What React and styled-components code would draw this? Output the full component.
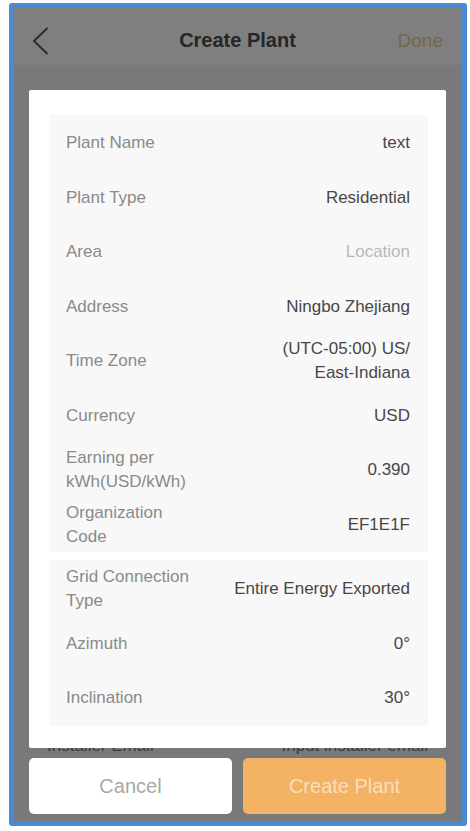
import styled, { createGlobalStyle } from "styled-components";

const GlobalStyle = createGlobalStyle`
  body {
    margin: 0;
    background: #ffffff;
    font-family: "Liberation Sans", Arial, sans-serif;
  }
`;

const basics = [
  { label: "Plant Name", value: "text" },
  { label: "Plant Type", value: "Residential" },
  { label: "Area", value: "Location", placeholder: true },
  { label: "Address", value: "Ningbo Zhejiang" },
  { label: "Time Zone", value: "(UTC-05:00) US/\nEast-Indiana" },
  { label: "Currency", value: "USD" },
  { label: "Earning per\nkWh(USD/kWh)", value: "0.390" },
  { label: "Organization\nCode", value: "EF1E1F" },
];

const system = [
  { label: "Grid Connection\nType", value: "Entire Energy Exported" },
  { label: "Azimuth", value: "0°" },
  { label: "Inclination", value: "30°" },
];

const BackIcon = () => (
  <svg width="17" height="28" viewBox="0 0 17 28" fill="none">
    <polyline
      points="15,1.5 2,14 15,26.5"
      stroke="#2c2c2c"
      strokeWidth="2"
      strokeLinecap="round"
      strokeLinejoin="round"
    />
  </svg>
);

const App = () => {
  return (
    <>
      <GlobalStyle />
      <Frame>
        <Header>
          <Back>
            <BackIcon />
          </Back>
          <Title>Create Plant</Title>
          <Done>Done</Done>
        </Header>
        <Body>
          <Card>
            <Group>
              {basics.map((row) => (
                <Row key={row.label}>
                  <Label>{row.label}</Label>
                  <Value $placeholder={row.placeholder}>{row.value}</Value>
                </Row>
              ))}
            </Group>
            <Group $offset>
              {system.map((row) => (
                <Row key={row.label}>
                  <Label>{row.label}</Label>
                  <Value>{row.value}</Value>
                </Row>
              ))}
            </Group>
          </Card>
          <Peek>
            <PeekText>Installer Email</PeekText>
            <PeekText>Input installer email</PeekText>
          </Peek>
          <Footer>
            <Button>Cancel</Button>
            <Button $primary>Create Plant</Button>
          </Footer>
        </Body>
      </Frame>
    </>
  );
};

export default App;

const Frame = styled.div`
  box-sizing: border-box;
  margin: 3px 0 0 9px;
  width: 458px;
  height: 823px;
  border: 5px solid #4b89d5;
  border-radius: 3px;
  background: #78797a;
  display: flex;
  flex-direction: column;
  overflow: hidden;
`;

const Header = styled.div`
  height: 57px;
  box-sizing: border-box;
  flex-shrink: 0;
  background: #7f7f7f;
  display: grid;
  grid-template-columns: 1fr auto 1fr;
  align-items: center;
  padding: 8px 19px 0 18px;
`;

const Back = styled.div`
  display: flex;
  align-items: center;
`;

const Title = styled.div`
  font-size: 20px;
  font-weight: bold;
  color: #262626;
`;

const Done = styled.div`
  justify-self: end;
  font-size: 19px;
  color: #76664a;
`;

const Body = styled.div`
  display: flex;
  flex-direction: column;
  padding: 25px 16px 0 15px;
`;

const Card = styled.div`
  height: 658px;
  box-sizing: border-box;
  background: #ffffff;
  border-radius: 2px;
  padding: 25px 18px 0 20px;
  display: flex;
  flex-direction: column;
  gap: 8px;
  position: relative;
  z-index: 1;
`;

const Group = styled.div`
  background: #f8f8f8;
  padding: ${(p) => (p.$offset ? "2px 18px 0 17px" : "1px 18px 0 17px")};
`;

const Row = styled.div`
  height: 54.5px;
  display: flex;
  align-items: center;
  justify-content: space-between;
  gap: 12px;
`;

const Label = styled.div`
  font-size: 17px;
  line-height: 24px;
  color: #8a8a8a;
  white-space: pre-line;
`;

const Value = styled.div`
  font-size: 17px;
  line-height: 24px;
  text-align: right;
  white-space: pre-line;
  color: ${(p) => (p.$placeholder ? "#b8b8b8" : "#474747")};
`;

const Peek = styled.div`
  height: 10px;
  overflow: hidden;
  display: flex;
  justify-content: space-between;
  padding: 0 18px 0 18px;
`;

const PeekText = styled.div`
  margin-top: -12px;
  font-size: 17px;
  line-height: 20px;
  color: #3a3a3a;
`;

const Footer = styled.div`
  display: flex;
  gap: 11px;
`;

const Button = styled.div`
  flex: 1;
  height: 56px;
  border-radius: 5px;
  display: flex;
  align-items: center;
  justify-content: center;
  font-size: 20px;
  background: ${(p) => (p.$primary ? "#f3b264" : "#ffffff")};
  color: ${(p) => (p.$primary ? "#fbdfbd" : "#a8a8a8")};
`;
